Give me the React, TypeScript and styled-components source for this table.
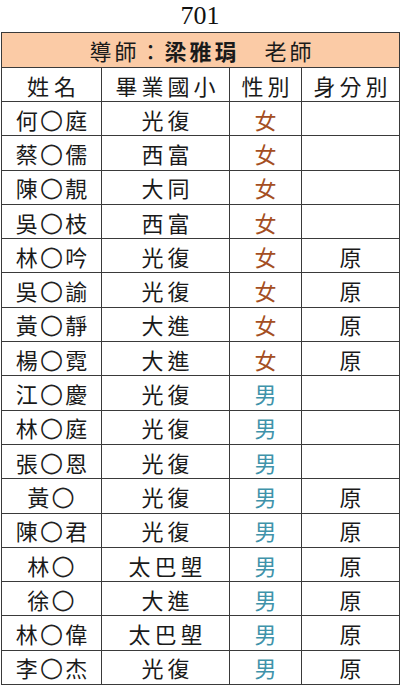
import React from "react";
import styled, { createGlobalStyle } from "styled-components";

const GlobalStyle = createGlobalStyle`
	html, body {
		margin: 0;
		padding: 0;
		background: #ffffff;
	}
`;

type Gender = "女" | "男";

interface Student {
	name: string;
	school: string;
	gender: Gender;
	native: boolean;
}

const students: Student[] = [
	{ name: "何○庭", school: "光復", gender: "女", native: false },
	{ name: "蔡○儒", school: "西富", gender: "女", native: false },
	{ name: "陳○靚", school: "大同", gender: "女", native: false },
	{ name: "吳○枝", school: "西富", gender: "女", native: false },
	{ name: "林○吟", school: "光復", gender: "女", native: true },
	{ name: "吳○諭", school: "光復", gender: "女", native: true },
	{ name: "黃○靜", school: "大進", gender: "女", native: true },
	{ name: "楊○霓", school: "大進", gender: "女", native: true },
	{ name: "江○慶", school: "光復", gender: "男", native: false },
	{ name: "林○庭", school: "光復", gender: "男", native: false },
	{ name: "張○恩", school: "光復", gender: "男", native: false },
	{ name: "黃○", school: "光復", gender: "男", native: true },
	{ name: "陳○君", school: "光復", gender: "男", native: true },
	{ name: "林○", school: "太巴塱", gender: "男", native: true },
	{ name: "徐○", school: "大進", gender: "男", native: true },
	{ name: "林○偉", school: "太巴塱", gender: "男", native: true },
	{ name: "李○杰", school: "光復", gender: "男", native: true },
];

const CJK = `"Noto Sans CJK TC", "Noto Sans CJK SC", sans-serif`;

const Sheet = styled.div`
	width: 398px;
	padding-left: 1px;
`;

const Title = styled.div`
	height: 32px;
	display: flex;
	align-items: center;
	justify-content: center;
	font-family: "Liberation Serif", serif;
	font-size: 26px;
	color: #111;
`;

const Table = styled.table`
	width: 398px;
	border-collapse: collapse;
	table-layout: fixed;
	font-family: ${CJK};
	color: #1a1a1a;
`;

const TeacherCell = styled.td`
	height: 34px;
	padding: 0 0 0 3px;
	background: #fbcba6;
	border: 1px solid #3a3a3a;
	text-align: center;
	font-size: 22px;
	letter-spacing: 3px;
	font-weight: 400;

	strong {
		font-weight: 700;
	}
`;

const HeadCell = styled.th<{ $spacing: number }>`
	height: 33px;
	padding: 0 0 0 ${({ $spacing }) => $spacing}px;
	border: 1px solid #3a3a3a;
	font-weight: 400;
	font-size: 22px;
	letter-spacing: ${({ $spacing }) => $spacing}px;
	text-align: center;
`;

const Cell = styled.td<{ $spacing?: number }>`
	height: 33.3px;
	padding: 0 0 0 ${({ $spacing }) => $spacing ?? 2}px;
	border: 1px solid #3a3a3a;
	text-align: center;
	font-size: 22px;
	letter-spacing: ${({ $spacing }) => $spacing ?? 2}px;
	line-height: 1;
`;

const NameLine = styled.span`
	display: inline-flex;
	align-items: center;
	gap: 1px;
	letter-spacing: 0;
`;

const Masked = styled.span`
	display: inline-block;
	font-family: "DejaVu Sans", sans-serif;
	font-size: 27px;
	line-height: 22px;
	color: #222;
	margin: 0 1px;
`;

const GenderCell = styled(Cell)<{ $gender: Gender }>`
	color: ${({ $gender }) => ($gender === "女" ? "#a44e22" : "#3f93aa")};
`;

function Name({ value }: { value: string }) {
	const [first, rest] = value.split("○");
	return (
		<NameLine>
			<span>{first}</span>
			<Masked>○</Masked>
			{rest ? <span>{rest}</span> : null}
		</NameLine>
	);
}

export default function App() {
	return (
		<>
			<GlobalStyle />
			<Sheet>
				<Title>701</Title>
				<Table>
					<colgroup>
						<col style={{ width: 100 }} />
						<col style={{ width: 128 }} />
						<col style={{ width: 72 }} />
						<col style={{ width: 98 }} />
					</colgroup>
					<thead>
						<tr>
							<TeacherCell colSpan={4}>
								導師：<strong>梁雅琄</strong>　老師
							</TeacherCell>
						</tr>
						<tr>
							<HeadCell $spacing={5}>姓名</HeadCell>
							<HeadCell $spacing={4}>畢業國小</HeadCell>
							<HeadCell $spacing={4}>性別</HeadCell>
							<HeadCell $spacing={4}>身分別</HeadCell>
						</tr>
					</thead>
					<tbody>
						{students.map((s) => (
							<tr key={s.name + s.school}>
								<Cell $spacing={0}>
									<Name value={s.name} />
								</Cell>
								<Cell $spacing={4}>{s.school}</Cell>
								<GenderCell $gender={s.gender}>{s.gender}</GenderCell>
								<Cell>{s.native ? "原" : ""}</Cell>
							</tr>
						))}
					</tbody>
				</Table>
			</Sheet>
		</>
	);
}
